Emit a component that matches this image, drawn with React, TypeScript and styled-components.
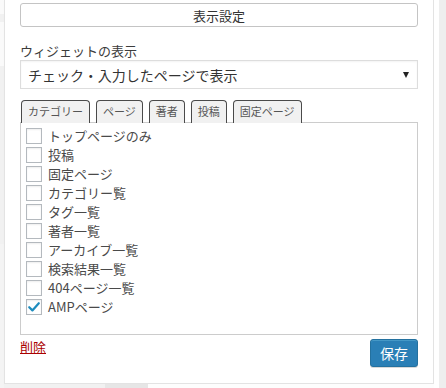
import React from "react";
import styled, { createGlobalStyle } from "styled-components";

const GlobalStyle = createGlobalStyle`
  html, body { margin: 0; padding: 0; background: #f1f1f1; }
  body { font-family: "Noto Sans CJK JP", "Noto Sans", sans-serif; }
  * { box-sizing: border-box; }
`;

const Page = styled.div`
  display: flex;
  width: 446px;
  height: 388px;
  overflow: hidden;
  background: #f1f1f1;
`;

const Gutter = styled.div`
  width: 4px;
  flex: none;
  overflow: hidden;
  display: flex;
  flex-direction: column;
`;

const GutterBlock = styled.div<{ $h: number; $bg: string }>`
  height: ${(p) => p.$h}px;
  background: ${(p) => p.$bg};
  flex: none;
`;

const Column = styled.div`
  display: flex;
  flex-direction: column;
  flex: none;
`;

const Panel = styled.div`
  width: 430px;
  height: 384px;
  background: #fff;
  border: 1px solid #e3e3e3;
  border-top: none;
  padding: 3px 15px 0 15px;
  display: flex;
  flex-direction: column;
  box-shadow: 0 1px 1px rgba(0, 0, 0, 0.04);
`;

const BottomStrip = styled.div`
  display: flex;
  height: 4px;
`;

const StripPart = styled.div<{ $w: number; $bg: string }>`
  width: ${(p) => p.$w}px;
  background: ${(p) => p.$bg};
`;

const RightStrip = styled.div`
  width: 5px;
  flex: none;
  background: #fff;
`;

const RightGray = styled.div`
  flex: 1;
  background: #eeeeee;
`;

const WideButton = styled.div`
  height: 24px;
  border: 1px solid #c4c4c4;
  border-radius: 3px;
  background: #fff;
  display: flex;
  align-items: center;
  justify-content: center;
  font-size: 13px;
  color: #333;
  line-height: 1;
`;

const Label = styled.div`
  margin-top: 15px;
  height: 18px;
  font-size: 13px;
  line-height: 18px;
  color: #3c3c3c;
`;

const Select = styled.div`
  height: 29px;
  border: 1px solid #ddd;
  display: flex;
  align-items: center;
  justify-content: space-between;
  padding: 0 7px 0 7px;
  font-size: 14px;
  color: #333;
  box-shadow: inset 0 1px 2px rgba(0, 0, 0, 0.05);
`;

const Arrow = styled.span`
  width: 0;
  height: 0;
  border-left: 3px solid transparent;
  border-right: 3px solid transparent;
  border-top: 6px solid #222;
  margin-right: 1px;
`;

const Tabs = styled.div`
  display: flex;
  gap: 6px;
  margin-top: 11px;
  padding-left: 1px;
  margin-bottom: -1px;
  position: relative;
  z-index: 1;
`;

const Tab = styled.div`
  height: 23px;
  padding: 0 6px;
  border: 1px solid #4a4a4a;
  border-bottom: none;
  border-radius: 4px 4px 0 0;
  background: #f1f1f1;
  font-size: 11px;
  line-height: 21px;
  color: #555;
`;

const Box = styled.div`
  height: 213px;
  border: 1px solid #cccccc;
  padding: 3px 5px;
  display: flex;
  flex-direction: column;
`;

const Row = styled.label`
  height: 19px;
  display: flex;
  align-items: center;
  gap: 6px;
  font-size: 13px;
  color: #4a4a4a;
  line-height: 19px;
`;

const Check = styled.span`
  width: 16px;
  height: 16px;
  border: 1px solid #b4b9be;
  background: #fff;
  box-shadow: inset 0 1px 2px rgba(0, 0, 0, 0.07);
  display: flex;
  align-items: center;
  justify-content: center;
  flex: none;
`;

const Footer = styled.div`
  margin-top: 4px;
  display: flex;
  justify-content: space-between;
  align-items: flex-start;
`;

const DeleteLink = styled.a`
  font-size: 13px;
  line-height: 16px;
  color: #a00;
  text-decoration: underline;
`;

const SaveButton = styled.div`
  width: 48px;
  height: 28px;
  border-radius: 3px;
  background: #2a7fb6;
  border: 1px solid #24719f;
  box-shadow: inset 0 1px 0 rgba(120, 200, 230, 0.35), 0 1px 0 rgba(0, 0, 0, 0.15);
  color: #fff;
  font-size: 14px;
  display: flex;
  align-items: center;
  justify-content: center;
  line-height: 1;
`;

const items = [
  "トップページのみ",
  "投稿",
  "固定ページ",
  "カテゴリー覧",
  "タグ一覧",
  "著者一覧",
  "アーカイブ一覧",
  "検索結果一覧",
  "404ページ一覧",
  "AMPページ",
];

const tabs = ["カテゴリー", "ページ", "著者", "投稿", "固定ページ"];

export default function App() {
  return (
    <>
      <GlobalStyle />
      <Page>
        <Gutter>
          <GutterBlock $h={14} $bg="#fafafa" />
          <GutterBlock $h={8} $bg="#f1f1f1" />
          <GutterBlock $h={44} $bg="#fafafa" />
          <GutterBlock $h={178} $bg="#f1f1f1" />
          <GutterBlock $h={150} $bg="#f4f4f4" />
        </Gutter>
        <Column>
          <Panel>
            <WideButton>表示設定</WideButton>
            <Label>ウィジェットの表示</Label>
            <Select>
              <span>チェック・入力したページで表示</span>
              <Arrow />
            </Select>
            <Tabs>
              {tabs.map((t) => (
                <Tab key={t}>{t}</Tab>
              ))}
            </Tabs>
            <Box>
              {items.map((it) => (
                <Row key={it}>
                  <Check>
                    {it === "AMPページ" && (
                      <svg width="14" height="14" viewBox="0 0 14 14">
                        <path
                          d="M2.2 7.2 L5.4 10.4 L11.8 3.2"
                          fill="none"
                          stroke="#1e8cbe"
                          strokeWidth="2.2"
                          strokeLinecap="round"
                          strokeLinejoin="round"
                        />
                      </svg>
                    )}
                  </Check>
                  <span>{it}</span>
                </Row>
              ))}
            </Box>
            <Footer>
              <DeleteLink>削除</DeleteLink>
              <SaveButton>保存</SaveButton>
            </Footer>
          </Panel>
          <BottomStrip>
            <StripPart $w={101} $bg="#f1f1f1" />
            <StripPart $w={43} $bg="#e6e6e6" />
            <StripPart $w={286} $bg="#fdfdfd" />
          </BottomStrip>
        </Column>
        <RightStrip />
        <RightGray />
      </Page>
    </>
  );
}
